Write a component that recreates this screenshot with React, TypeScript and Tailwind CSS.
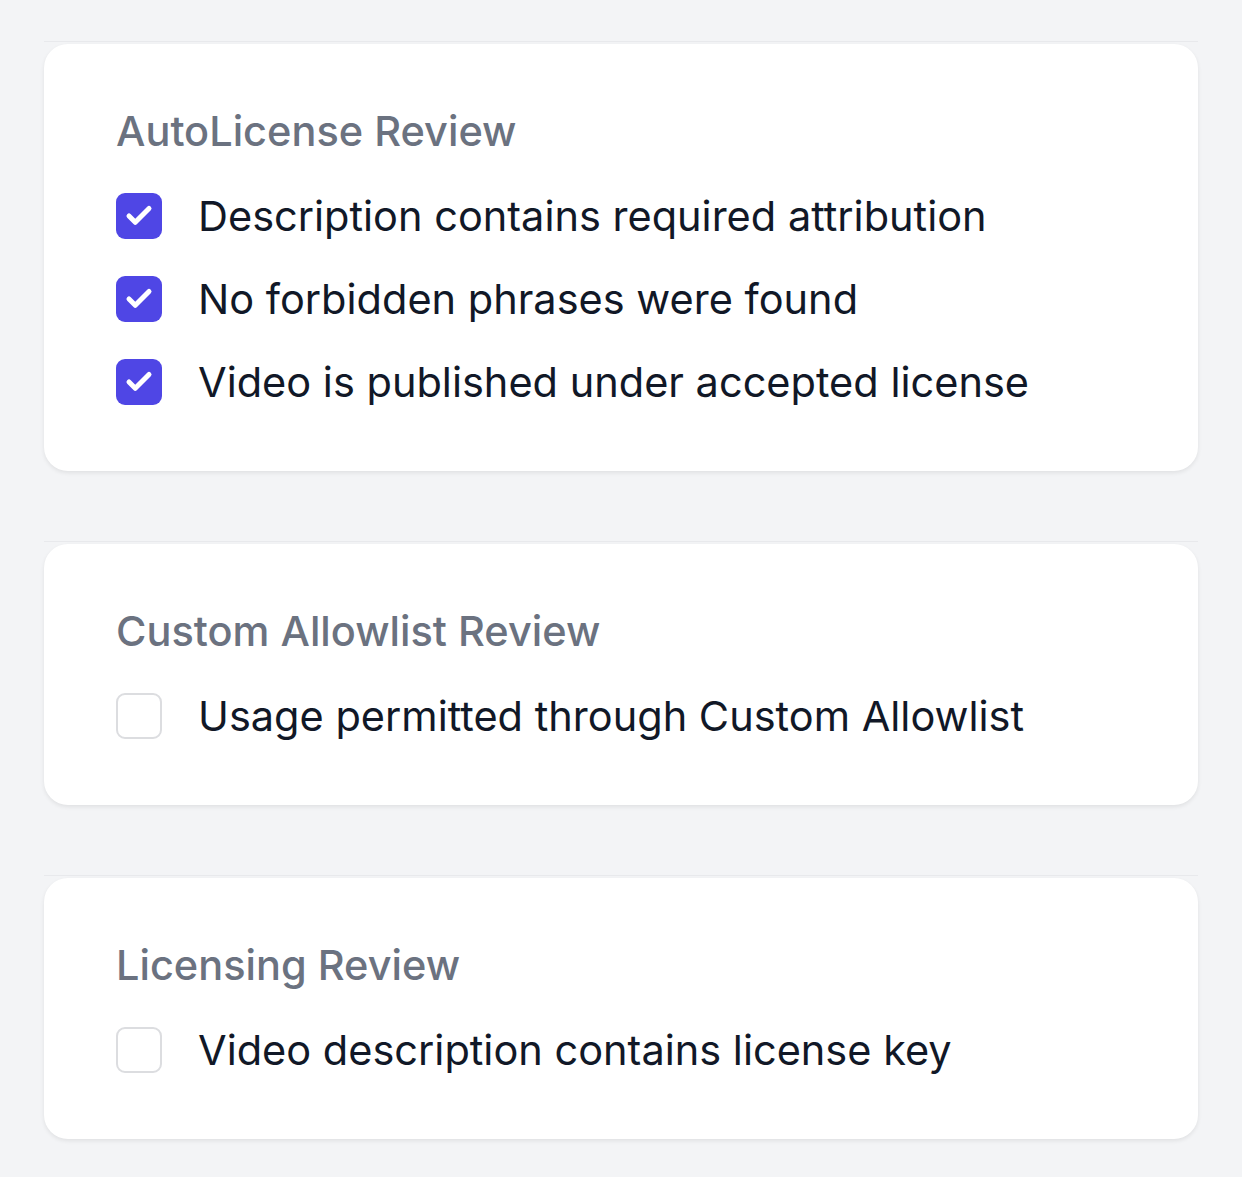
import { Check } from 'lucide-react';

type Item = { label: string; checked: boolean };

const sections: { title: string; items: Item[] }[] = [
  {
    title: 'AutoLicense Review',
    items: [
      { label: 'Description contains required attribution', checked: true },
      { label: 'No forbidden phrases were found', checked: true },
      { label: 'Video is published under accepted license', checked: true },
    ],
  },
  {
    title: 'Custom Allowlist Review',
    items: [{ label: 'Usage permitted through Custom Allowlist', checked: false }],
  },
  {
    title: 'Licensing Review',
    items: [{ label: 'Video description contains license key', checked: false }],
  },
];

function Checkbox({ checked }: { checked: boolean }) {
  if (checked) {
    return (
      <span className="flex h-[46px] w-[46px] shrink-0 items-center justify-center rounded-[9px] bg-[#4f46e5]">
        <Check size={30} strokeWidth={4} className="text-white" />
      </span>
    );
  }
  return (
    <span className="h-[46px] w-[46px] shrink-0 rounded-[9px] border-2 border-[#dcdde0] bg-white" />
  );
}

function ReviewCard({ title, items }: { title: string; items: Item[] }) {
  return (
    <div className="border-t border-[#e8e9ec] pt-[2px]">
      <div className="rounded-[24px] bg-white px-[72px] pt-[53px] pb-[48px] shadow-[0_2px_4px_rgba(0,0,0,0.08)]">
        <h3 className="text-[41.5px] leading-[69px] font-medium text-[#6b7280]">{title}</h3>
        <ul className="mt-[8px]">
          {items.map((item) => (
            <li key={item.label} className="flex h-[83px] items-center gap-[36px]">
              <Checkbox checked={item.checked} />
              <span className="text-[41.5px] leading-[60px] text-[#111827]">{item.label}</span>
            </li>
          ))}
        </ul>
      </div>
    </div>
  );
}

export default function App() {
  return (
    <div
      className="min-h-[1177px] bg-[#f3f4f6] px-[44px] pt-[41px]"
      style={{ fontFamily: 'Inter, "Noto Sans", sans-serif' }}
    >
      <div className="flex flex-col gap-[70px]">
        {sections.map((s) => (
          <ReviewCard key={s.title} title={s.title} items={s.items} />
        ))}
      </div>
    </div>
  );
}
